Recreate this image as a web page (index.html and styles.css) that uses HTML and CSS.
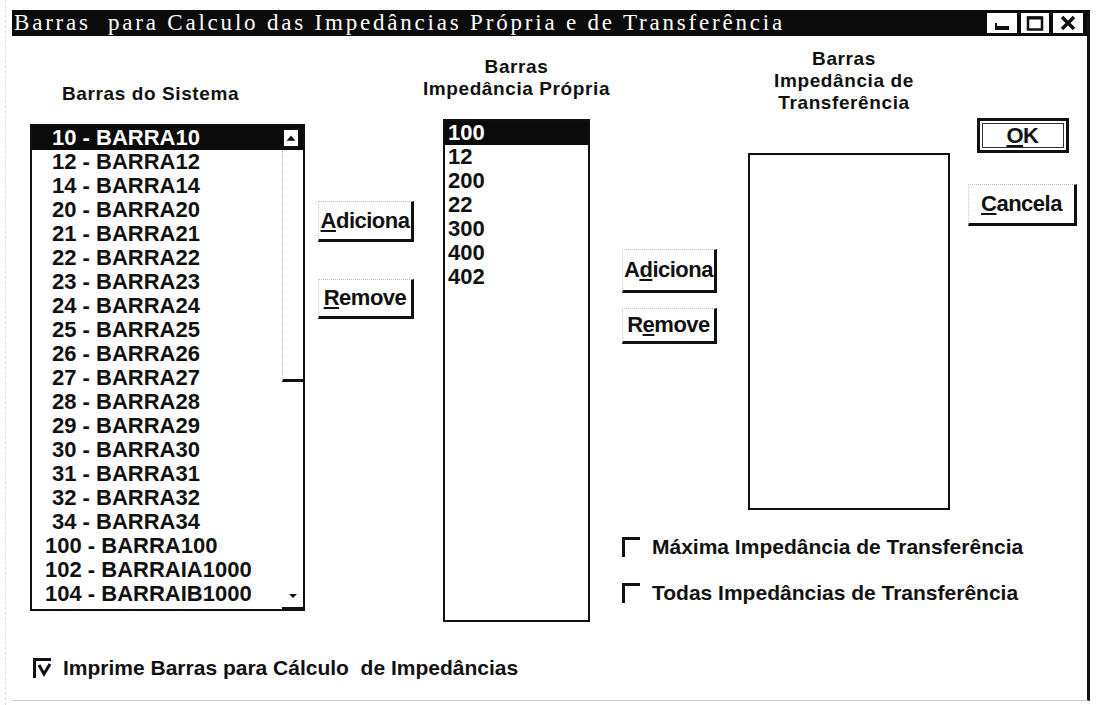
FILE: index.html
```html
<html>
	<head>
		<meta charset="utf-8">
		<link rel="stylesheet" href="styles.css">
	</head>
	<body>
		<div class="window">
			<div class="titlebar">
				<span class="title">Barras&nbsp; para Calculo das Impedâncias Própria e de Transferência</span>
				<div class="caption-buttons">
					<span class="cap-btn min"><svg width="30" height="20" viewBox="0 0 30 20"><rect x="8" y="13" width="14" height="4" fill="#111"/><rect x="8" y="10" width="2" height="4" fill="#111"/></svg></span>
					<span class="cap-btn max"><svg width="28" height="20" viewBox="0 0 28 20"><rect x="7" y="4.5" width="14" height="12" fill="none" stroke="#111" stroke-width="2.5"/><rect x="7" y="3.5" width="14" height="3" fill="#111"/></svg></span>
					<span class="cap-btn close"><svg width="30" height="20" viewBox="0 0 30 20"><path d="M9 4 L21 16 M21 4 L9 16" stroke="#111" stroke-width="3.5"/></svg></span>
				</div>
			</div>

			<div class="columns">
				<div class="col col-system">
					<h1 class="label">Barras do Sistema</h1>
					<div class="listbox system-list">
						<ul class="items">
							<li class="selected pad">10 - BARRA10</li>
							<li class="pad">12 - BARRA12</li>
							<li class="pad">14 - BARRA14</li>
							<li class="pad">20 - BARRA20</li>
							<li class="pad">21 - BARRA21</li>
							<li class="pad">22 - BARRA22</li>
							<li class="pad">23 - BARRA23</li>
							<li class="pad">24 - BARRA24</li>
							<li class="pad">25 - BARRA25</li>
							<li class="pad">26 - BARRA26</li>
							<li class="pad">27 - BARRA27</li>
							<li class="pad">28 - BARRA28</li>
							<li class="pad">29 - BARRA29</li>
							<li class="pad">30 - BARRA30</li>
							<li class="pad">31 - BARRA31</li>
							<li class="pad">32 - BARRA32</li>
							<li class="pad">34 - BARRA34</li>
							<li>100 - BARRA100</li>
							<li>102 - BARRAIA1000</li>
							<li>104 - BARRAIB1000</li>
						</ul>
						<div class="scrollbar">
							<div class="scroll-up"><svg width="16" height="16" viewBox="0 0 16 16"><path d="M3 11 L8 5 L13 11 Z" fill="#111"/></svg></div>
							<div class="thumb"></div>
							<div class="track"></div>
							<div class="scroll-down"><svg width="16" height="16" viewBox="0 0 16 16"><path d="M4 6 L8 10 L12 6 Z" fill="#111"/></svg></div>
						</div>
					</div>
				</div>

				<div class="col col-actions first-actions">
					<button class="btn add"><u>A</u>diciona</button>
					<button class="btn remove"><u>R</u>emove</button>
				</div>

				<div class="col col-own">
					<h1 class="label">Barras<br>Impedância Própria</h1>
					<div class="listbox own-list">
						<ul class="items">
							<li class="selected">100</li>
							<li>12</li>
							<li>200</li>
							<li>22</li>
							<li>300</li>
							<li>400</li>
							<li>402</li>
						</ul>
					</div>
				</div>

				<div class="right-panel">
					<div class="right-top">
						<div class="col col-actions second-actions">
							<button class="btn add">A<u>d</u>iciona</button>
							<button class="btn remove">R<u>e</u>move</button>
						</div>
						<div class="col col-transfer">
							<h1 class="label">Barras<br>Impedância de<br>Transferência</h1>
							<div class="listbox transfer-list"></div>
						</div>
						<div class="col col-dialog">
							<button class="btn default"><u>O</u>K</button>
							<button class="btn cancel"><u>C</u>ancela</button>
						</div>
					</div>
					<label class="check first"><span class="box"></span>Máxima Impedância de Transferência</label>
					<label class="check second"><span class="box"></span>Todas Impedâncias de Transferência</label>
				</div>
			</div>

			<label class="check print"><span class="box"><svg width="18" height="18" viewBox="0 0 18 18"><path d="M4 5 L9 14 L15 4" fill="none" stroke="#111" stroke-width="3"/></svg></span>Imprime Barras para Cálculo&nbsp; de Impedâncias</label>
		</div>
	</body>
</html>
```

FILE: styles.css
```css
* {
	box-sizing: border-box;
}
body {
	margin: 0 0 0 5px;
	border-left: 1px dashed #ddd;
	background-color: #fff;
	color: #111;
	font-family: "Liberation Sans", Arial, sans-serif;
	font-weight: bold;
}

.window {
	margin: 10px 0 0 6px;
	width: 1078px;
	height: 691px;
	border-right: 3px solid #111;
	border-bottom: 1px solid #c8c8c8;
}

/* title bar */
.titlebar {
	display: flex;
	align-items: center;
	justify-content: space-between;
	height: 26px;
	background-color: #0b0b0b;
	color: #fff;
}
.title {
	font-family: "Liberation Serif", "Times New Roman", serif;
	font-weight: normal;
	font-size: 23px;
	letter-spacing: 2.8px;
	padding-left: 2px;
	white-space: nowrap;
}
.caption-buttons {
	display: flex;
	gap: 4px;
	margin-right: 4px;
}
.cap-btn {
	display: block;
	height: 20px;
	background-color: #fff;
}
.cap-btn svg {
	display: block;
}

/* columns */
.columns {
	display: flex;
	align-items: flex-start;
	padding-left: 18px;
}
.col {
	display: flex;
	flex-direction: column;
}
.label {
	margin: 0;
	font-size: 19px;
	line-height: 22px;
	letter-spacing: 0.6px;
	text-align: center;
	white-space: nowrap;
}

.col-system {
	width: 275px;
}
.col-system .label {
	margin-top: 47px;
	text-align: left;
	padding-left: 32px;
}
.col-own {
	width: 147px;
	margin-left: 29px;
}
.col-own .label {
	margin: 20px -40px 0 -40px;
}
.col-transfer {
	width: 202px;
	margin-left: 31px;
}
.col-transfer .label {
	margin-top: 12px;
	margin-right: 10px;
}

/* list boxes */
.listbox {
	border: 2px solid #111;
	background-color: #fff;
	overflow: hidden;
}
.system-list {
	display: flex;
	margin-top: 19px;
	height: 487px;
}
.own-list {
	margin-top: 19px;
	height: 503px;
}
.transfer-list {
	margin-top: 39px;
	height: 357px;
}
.items {
	flex: 1;
	margin: 0;
	padding: 0;
	list-style: none;
	font-size: 22px;
}
.items li {
	height: 24px;
	line-height: 24px;
	white-space: nowrap;
}
.system-list li {
	padding-left: 13px;
}
.system-list li.pad {
	padding-left: 20px;
}
.own-list li {
	padding-left: 3px;
}
.items li.selected {
	background-color: #0b0b0b;
	color: #fff;
}

.scrollbar {
	display: flex;
	flex-direction: column;
	width: 21px;
}
.scroll-up {
	height: 24px;
	background-color: #0b0b0b;
	padding: 2px 3px 2px 0;
}
.scroll-up svg {
	display: block;
	width: 18px;
	height: 20px;
	background-color: #fff;
	border: 2px solid #111;
}
.thumb {
	height: 232px;
	border-left: 1px dotted #bbb;
	border-bottom: 3px solid #111;
}
.track {
	flex: 1;
}
.scroll-down {
	height: 24px;
	display: flex;
	align-items: center;
	justify-content: center;
	border-bottom: 2px solid #111;
}

/* buttons */
.btn {
	display: flex;
	align-items: center;
	justify-content: center;
	padding: 0;
	width: 100%;
	background-color: #fff;
	color: #111;
	font-family: "Liberation Sans", Arial, sans-serif;
	font-weight: bold;
	font-size: 22px;
	letter-spacing: -0.5px;
	white-space: nowrap;
	border-top: 1px dotted #bbb;
	border-left: 1px dotted #ccc;
	border-right: 3px solid #111;
	border-bottom: 3px solid #111;
}
.btn u {
	text-decoration-thickness: 2px;
	text-underline-offset: 2px;
}

.first-actions {
	width: 96px;
	margin-left: 13px;
	margin-top: 165px;
}
.first-actions .add {
	height: 41px;
}
.first-actions .remove {
	height: 40px;
	margin-top: 37px;
}

.right-panel {
	display: flex;
	flex-direction: column;
	margin-left: 32px;
}
.right-top {
	display: flex;
	align-items: flex-start;
}
.second-actions {
	width: 95px;
	margin-top: 213px;
}
.second-actions .add {
	height: 44px;
}
.second-actions .remove {
	height: 36px;
	margin-top: 15px;
}

.col-dialog {
	width: 109px;
	margin-left: 18px;
	margin-top: 82px;
	align-items: center;
}
.btn.default {
	width: 92px;
	height: 35px;
	border: 3px solid #111;
	box-shadow: inset 0 0 0 2px #fff, inset 0 0 0 3px #333;
}
.btn.cancel {
	height: 42px;
	margin-top: 31px;
}

/* check boxes */
.check {
	display: flex;
	align-items: center;
	height: 24px;
	font-size: 21px;
	white-space: nowrap;
}
.box {
	width: 18px;
	height: 20px;
	margin-right: 12px;
	border-top: 3px solid #111;
	border-left: 3px solid #111;
}
.box svg {
	display: block;
	margin: -1px 0 0 -1px;
}
.check.first {
	margin-top: 25px;
}
.check.second {
	margin-top: 22px;
}
.check.print {
	margin: 34px 0 0 21px;
}
```
